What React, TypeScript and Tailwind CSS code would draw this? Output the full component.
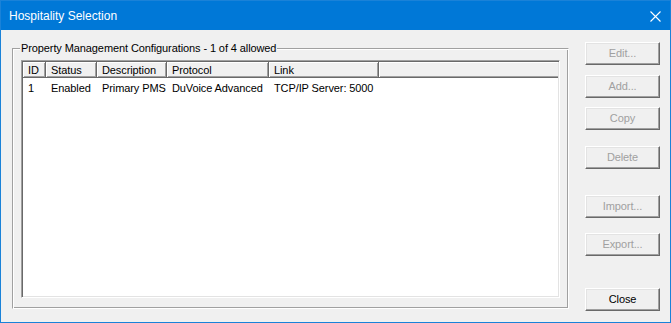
import React from 'react';

const ui = "font-['Liberation_Sans',Arial,sans-serif]";

const btnBase =
  "w-[75px] h-[23px] shrink-0 bg-[#f0f0f0] border border-t-white border-l-white border-b-[#696969] border-r-[#696969] shadow-[inset_-1px_-1px_0_#a0a0a0,inset_1px_1px_0_#e3e3e3] text-[11px] leading-[21px] text-center";

interface Column {
  title: string;
  width: string;
}

const columns: Column[] = [
  { title: 'ID', width: 'w-[23px]' },
  { title: 'Status', width: 'w-[51px]' },
  { title: 'Description', width: 'w-[70px]' },
  { title: 'Protocol', width: 'w-[102px]' },
  { title: 'Link', width: 'w-[110px]' },
];

const rows = [['1', 'Enabled', 'Primary PMS', 'DuVoice Advanced', 'TCP/IP Server: 5000']];

function DlgButton({ label, disabled, className }: { label: string; disabled?: boolean; className?: string }) {
  return (
    <button className={`${btnBase} ${disabled ? 'text-[#a0a0a0]' : 'text-black'} ${className ?? ''}`}>
      {label}
    </button>
  );
}

export default function App() {
  return (
    <div className={`w-[671px] h-[323px] flex flex-col bg-[#f0f0f0] border border-[#1a82d8] ${ui}`}>
      {/* Barra de título */}
      <div className="h-[29px] shrink-0 bg-[#0078d7] flex items-center justify-between pl-[8px] pr-[9px]">
        <span className="text-white text-[12px] leading-none pt-[1px]">Hospitality Selection</span>
        <svg width="11" height="11" viewBox="0 0 11 11" className="mt-[1px]">
          <path d="M0.5 0.5 L10.5 10.5 M10.5 0.5 L0.5 10.5" stroke="#fff" strokeWidth="1.1" fill="none" />
        </svg>
      </div>

      {/* Cuerpo */}
      <div className="flex flex-1 pl-[11px] pt-[18px] tracking-[-0.1px]">
        {/* Group box */}
        <div className="relative w-[557px] h-[261px] border border-t-[#a0a0a0] border-l-[#a0a0a0] border-b-white border-r-white shadow-[inset_1px_1px_0_#fff,inset_-1px_-1px_0_#a0a0a0] pl-[8px] pr-[8px] pt-[11px] pb-[10px]">
          <span className="absolute left-[7px] -top-[8px] bg-[#f0f0f0] px-[1px] text-[11px] leading-[14px] text-black">
            Property Management Configurations - 1 of 4 allowed
          </span>

          {/* List view */}
          <div className="w-[539px] h-[238px] bg-white border border-t-[#a0a0a0] border-l-[#a0a0a0] border-b-white border-r-white shadow-[inset_1px_1px_0_#696969,inset_-1px_-1px_0_#e3e3e3] p-[1px] overflow-hidden">
            <div className="flex h-[16px] bg-[#f0f0f0]">
              {columns.map(c => (
                <div
                  key={c.title}
                  className={`${c.width} shrink-0 h-[16px] border-r border-b border-[#696969] shadow-[inset_1px_1px_0_#fff,inset_-1px_-1px_0_#a0a0a0] pl-[5px] text-[11px] leading-[16px] text-black whitespace-nowrap`}
                >
                  {c.title}
                </div>
              ))}
              <div className="flex-1 h-[16px] border-b border-[#696969] shadow-[inset_1px_1px_0_#fff,inset_0_-1px_0_#a0a0a0]" />
            </div>
            {rows.map((r, i) => (
              <div key={i} className="flex h-[20px] items-center">
                {r.map((cell, j) => (
                  <div
                    key={j}
                    className={`${columns[j].width} shrink-0 pl-[5px] text-[11px] leading-[20px] text-black whitespace-nowrap`}
                  >
                    {cell}
                  </div>
                ))}
              </div>
            ))}
          </div>
        </div>

        {/* Botones */}
        <div className="flex flex-col ml-[16px] -mt-[6px]">
          <DlgButton label="Edit..." disabled />
          <DlgButton label="Add..." disabled className="mt-[10px]" />
          <DlgButton label="Copy" disabled className="mt-[9px]" />
          <DlgButton label="Delete" disabled className="mt-[16px]" />
          <DlgButton label="Import..." disabled className="mt-[26px]" />
          <DlgButton label="Export..." disabled className="mt-[15px]" />
          <DlgButton label="Close" className="mt-[32px]" />
        </div>
      </div>
    </div>
  );
}
